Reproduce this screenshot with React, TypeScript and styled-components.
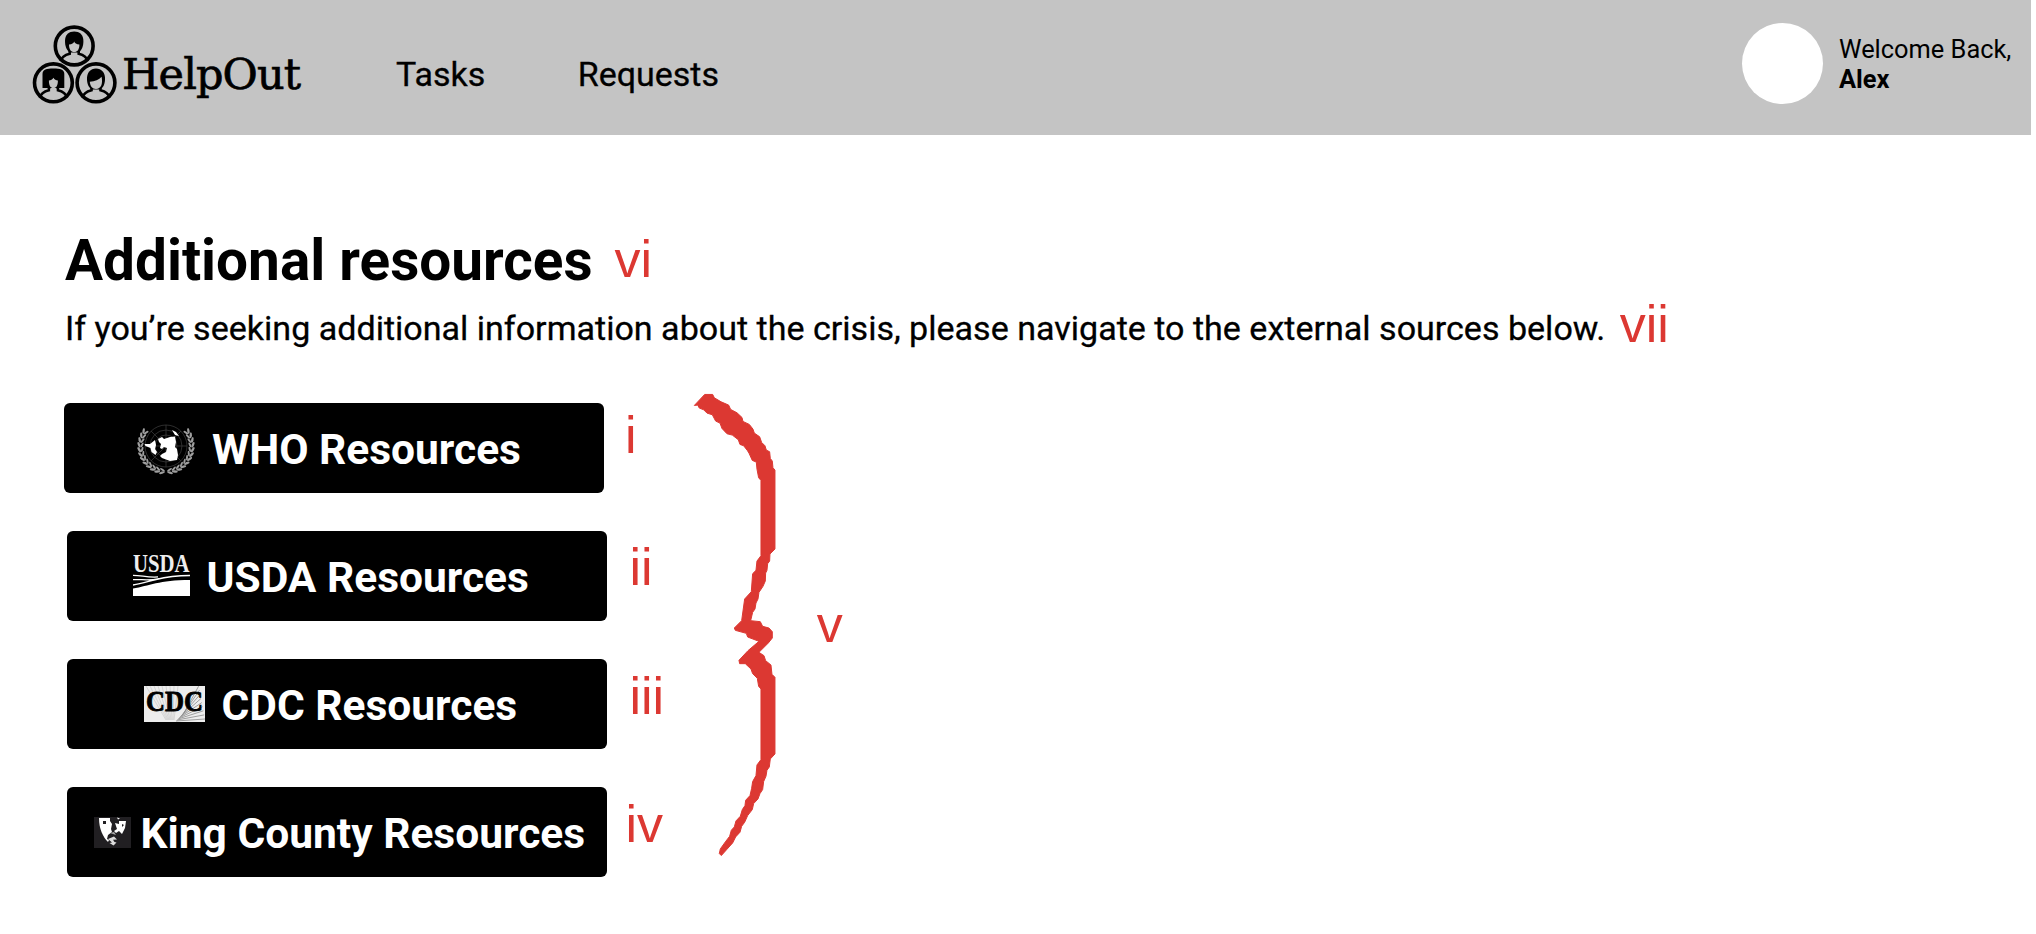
import React from 'react';
import styled, { createGlobalStyle } from 'styled-components';

const RED = '#dc3832';

const GlobalStyle = createGlobalStyle`
  * { box-sizing: border-box; }
  body {
    margin: 0;
    background: #fff;
    color: #000;
    font-family: Roboto, sans-serif;
  }
`;

const Page = styled.div`
  width: 2036px;
  height: 934px;
  overflow: hidden;
`;

const Header = styled.header`
  display: flex;
  align-items: center;
  width: 2031px;
  height: 134.5px;
  padding: 0 18px 7px 32px;
  background: #c4c4c4;
`;

const Brand = styled.div`
  display: flex;
  align-items: center;
  width: 364px;
`;

const BrandName = styled.span`
  padding: 20px 0 0 4px;
  font: 400 43px/50px 'DejaVu Serif', serif;
  letter-spacing: -0.9px;
  -webkit-text-stroke: 0.7px #000;
`;

const Nav = styled.nav`
  display: flex;
  gap: 92.5px;
  padding-top: 20px;
`;

const NavLink = styled.a`
  font-size: 34px;
  line-height: 40px;
  -webkit-text-stroke: 0.3px #000;
`;

const User = styled.div`
  display: flex;
  align-items: center;
  gap: 16px;
  margin-left: auto;
`;

const Avatar = styled.div`
  width: 81px;
  height: 81px;
  border-radius: 50%;
  background: #fff;
`;

const Greeting = styled.div`
  width: 174px;
  font-size: 25.4px;
  line-height: 30px;
  white-space: nowrap;
`;

const Main = styled.main`
  padding: 92.5px 0 0 64px;
`;

const TextRow = styled.div<{ $gap: number }>`
  display: flex;
  align-items: flex-start;
  gap: ${p => p.$gap}px;
  padding-left: 1px;
`;

const Title = styled.h1`
  margin: 0;
  padding-top: 1px;
  font-size: 56.7px;
  line-height: 66px;
  white-space: nowrap;
`;

const Intro = styled.p`
  margin: 0;
  padding-top: 14px;
  font-size: 34.05px;
  line-height: 40px;
  white-space: nowrap;
  -webkit-text-stroke: 0.3px #000;
`;

const Note = styled.span<{ $top?: number; $left?: number }>`
  padding: ${p => p.$top ?? 0}px 0 0 ${p => p.$left ?? 0}px;
  font: 400 52px/60px 'Liberation Sans', sans-serif;
  color: ${RED};
`;

const Columns = styled.div`
  display: flex;
  align-items: flex-start;
  padding-top: 37px;
`;

const List = styled.div`
  display: flex;
  flex-direction: column;
  gap: 37.7px;
  width: 629px;
  padding-top: 12px;
`;

const Row = styled.div<{ $indent: number; $gap: number }>`
  display: flex;
  align-items: flex-start;
  gap: ${p => p.$gap}px;
  height: 90.3px;
  padding-left: ${p => p.$indent}px;
`;

const ResourceButton = styled.button<{ $inset: number; $gap: number }>`
  display: flex;
  align-items: center;
  gap: ${p => p.$gap}px;
  flex: none;
  width: 540px;
  height: 90.3px;
  padding: 0 0 0 ${p => p.$inset}px;
  border: 0;
  border-radius: 6px;
  background: #000;
  color: #fff;
  font: 700 42.5px/50px Roboto, sans-serif;
  white-space: nowrap;
`;

const ButtonText = styled.span`
  padding-top: 4px;
`;

const Brace = styled.svg`
  display: block;
  flex: none;
`;

const Icon = styled.svg<{ $top?: number }>`
  display: block;
  flex: none;
  overflow: visible;
  margin-top: ${p => p.$top ?? 0}px;
`;

const Shoulders = ({ x, y }: { x: number; y: number }) => (
  <path
    d={`M${x - 13.5} ${y + 13}c1-4.5 4.5-6 9-7.2v-3h9v3c4.5 1.2 8 2.7 9 7.2`}
    fill="none" stroke="#000" strokeWidth="2.6"
  />
);

const Logo = () => (
  <Icon viewBox="32 24 86 82" width="86" height="82" $top={2}>
    <g fill="none" stroke="#000" strokeWidth="3.6">
      <circle cx="74.2" cy="46" r="18.9" />
      <circle cx="53.4" cy="82.8" r="18.9" />
      <circle cx="96" cy="82.8" r="18.9" />
    </g>
    <Shoulders x={74.2} y={48} />
    <path d="M65 41c0-6.500 4-9.500 9.200-9.500S83.400 34.500 83.400 41c0 5-1.500 9.500-5 11.500h-8.400C66.500 50.500 65 46 65 41z" />
    <path d="M69 44.500c3 0 4.600-1.400 5.200-3 .6 1.600 2.200 3 5.200 3 0 5-2 7.500-5.200 7.500s-5.200-2.500-5.200-7.500z" fill="#c4c4c4" />
    <Shoulders x={53.4} y={84.5} />
    <path d="M42.500 88V74c0-4.500 4-5.500 10.900-5.500S64.300 69.500 64.300 74v14z" />
    <path d="M48.900 80.500c1.800 0 3.500-1 4.500-2.700 1 1.700 2.700 2.700 4.500 2.700 0 5-1.500 7.500-4.500 7.500s-4.500-2.500-4.500-7.500z" fill="#c4c4c4" />
    <path d="M50.600 88h5.600v3.500h-5.600z" fill="#c4c4c4" />
    <Shoulders x={96} y={84.5} />
    <path d="M87 80c-.5-7.500 3.500-11.500 9-11.500s9.500 4 9 11.500c-.4 5-2 7.500-5 9.500h-8C89 87.500 87.400 85 87 80z" />
    <path d="M89.800 81.800c5.200-.3 9.200-2 11.800-5 1.500 7.500-.8 12.200-5.600 12.200-3.700 0-5.800-2.700-6.200-7.200z" fill="#c4c4c4" />
  </Icon>
);

const leafAngles = Array.from({ length: 12 }, (_, i) => 56 + i * 10.5);

const WhoIcon = () => (
  <Icon viewBox="0 0 60 52" width="60" height="52">
    <g fill="none" stroke="#fff" strokeWidth=".7" opacity=".25">
      <circle cx="30" cy="24" r="21" />
      <circle cx="30" cy="24" r="16" />
      <circle cx="30" cy="24" r="11" />
      <path d="M30 3v42M9 24h42M15 9l30 30M45 9L15 39" />
    </g>
    {leafAngles.map(a => (
      <g key={a} fill="#fff" opacity=".62">
        {[a, -a].map(r => (
          <g key={r} transform={`translate(30 24) rotate(${r})`}>
            <ellipse cx="0" cy="-27" rx="3" ry="1.2" transform={`rotate(${r > 0 ? 25 : -25} 0 -27)`} />
            <ellipse cx="0" cy="-24" rx="2.8" ry="1" transform={`rotate(${r > 0 ? -25 : 25} 0 -24)`} />
          </g>
        ))}
      </g>
    ))}
    <path d="M8.500 22l5.500 0 5-4 1 5-1 4 2 3-1.500 3-4-3-1-4-5-2zM22 17l4-2 2 2 6-2 5-.5 1 5.500-1 5 2 2 1 6-1 5-7 1-8-3-2-2 2-2 4-2 1-4-3-1-2 2-2-1 1-4-2-2zM36 8l4 2 3 4-4-1z" fill="#fff" />
  </Icon>
);

const UsdaIcon = () => (
  <Icon viewBox="0 0 57 40" width="57" height="40">
    <text x="0" y="16" textLength="56.5" lengthAdjust="spacingAndGlyphs" fill="#eee" fontFamily="Liberation Serif, serif" fontSize="24.5">USDA</text>
    <path d="M0 40V32.500C16 30 26 24 57 24V40z" fill="#fff" />
    <path d="M0 19.300c9 0 14 2.400 25 1.600M57 19.500c-15 0-25 1.700-34 4S8 28 0 29M0 23.600c9-.4 16 1.400 26-1" fill="none" stroke="#fff" strokeWidth="1.3" />
  </Icon>
);

const rays = Array.from({ length: 9 }, (_, i) => i);

const CdcIcon = () => (
  <Icon viewBox="0 0 61 36" width="61" height="36">
    <rect width="61" height="36" fill="#ededed" />
    <g stroke="#8a8a8a" strokeWidth=".8">
      {rays.map(i => <path key={i} d={`M${32 + i} ${35 - i}L${61 - i * 0.8} ${33 - i * 4.1}`} />)}
      {rays.map(i => <path key={i + 20} d={`M${30 - i} 34L${34 - i * 4} 0`} opacity=".3" />)}
    </g>
    <text x="2" y="25" textLength="57" lengthAdjust="spacingAndGlyphs" fill="#000" stroke="#000" strokeWidth=".9" fontFamily="Liberation Serif, serif" fontWeight="700" fontSize="30">CDC</text>
  </Icon>
);

const KingIcon = () => (
  <Icon viewBox="0 0 37 31" width="37" height="31">
    <rect width="37" height="31" fill="#211f22" />
    <path d="M5 1h11v3l2 3-1 5 1 3-4 3-1 4 2 1-1 2C9 20 5 12 5 1zM21 6l4 1V4h7l-1 7-3 6-3-3-3 2-2-2 3-2zM23 .5l3 1-2 1z" fill="#fff" />
    <path d="M9 4h3v3H9zM28 7l2 1-2 2z" fill="#211f22" />
    <path d="M14 22l6-2.500 3 3-4 .3 1.500 2.200 2 .5-3 3-4-2.500 2.500-.5z" fill="#ddd" />
    <path d="M16 16l4-1 2 3-3-1z" fill="#aaa" />
  </Icon>
);

const RESOURCES = [
  { label: 'WHO Resources', icon: <WhoIcon />, note: 'i', indent: 0, inset: 71.5, gap: 16.5, noteGap: 21, noteTop: 2 },
  { label: 'USDA Resources', icon: <UsdaIcon />, note: 'ii', indent: 3, inset: 65.5, gap: 17, noteGap: 22.5, noteTop: 6.5 },
  { label: 'CDC Resources', icon: <CdcIcon />, note: 'iii', indent: 3, inset: 77, gap: 16.5, noteGap: 22.5, noteTop: 7.5 },
  { label: 'King County Resources', icon: <KingIcon />, note: 'iv', indent: 3, inset: 26.5, gap: 10, noteGap: 18.5, noteTop: 7.5 },
];

export default function App() {
  return (
    <Page>
      <GlobalStyle />
      <Header>
        <Brand>
          <Logo />
          <BrandName>HelpOut</BrandName>
        </Brand>
        <Nav>
          <NavLink>Tasks</NavLink>
          <NavLink>Requests</NavLink>
        </Nav>
        <User>
          <Avatar />
          <Greeting>
            Welcome Back,
            <br />
            <b>Alex</b>
          </Greeting>
        </User>
      </Header>
      <Main>
        <TextRow $gap={22}>
          <Title>Additional resources</Title>
          <Note $top={2}>vi</Note>
        </TextRow>
        <TextRow $gap={14.5}>
          <Intro>
            If you’re seeking additional information about the crisis, please navigate to the external sources below.
          </Intro>
          <Note $top={-2}>vii</Note>
        </TextRow>
        <Columns>
          <List>
            {RESOURCES.map(r => (
              <Row key={r.label} $indent={r.indent} $gap={r.noteGap}>
                <ResourceButton $inset={r.inset} $gap={r.gap}>
                  {r.icon}
                  <ButtonText>{r.label}</ButtonText>
                </ResourceButton>
                <Note $top={r.noteTop}>{r.note}</Note>
              </Row>
            ))}
          </List>
          <Brace viewBox="40 30 250 1400" width="83.3" height="466.7">
            <path
              fill={RED}
              stroke={RED}
              strokeWidth="3"
              strokeLinejoin="round"
              d="M44 73L75 40 99 40 104 50 124 62 147 72 153 85 172 95 187 109 190 121 209 130 220 144 224 156 240 167 246 184 256 194 260 207 270 212 272 232 278 240 280 260 286 267 286 504 271 519 270 540 264 548 262 568 258 576 257 600 250 616 238 634 235 654 229 666 226 684 219 694 213 719 242 722 249 736 268 741 278 752 278 771 266 786 238 814 253 824 258 839 274 852 277 880 286 889 286 1119 272 1134 269 1158 262 1168 259 1186 252 1202 249 1226 241 1238 235 1254 222 1268 218 1286 204 1304 195 1324 186 1336 181 1354 168 1368 159 1386 142 1405 125 1424 119 1418 122 1404 137 1383 150 1366 155 1348 164 1338 169 1320 182 1306 188 1286 196 1274 198 1258 211 1244 216 1222 219 1202 229 1184 232 1152 244 1136 244 924 237 916 233 892 219 878 214 864 197 848 180 848 178 838 205 809 238 781 204 768 200 757 167 748 164 741 186 719 195 654 215 632 219 578 229 568 232 540 244 524 244 298 237 290 232 264 230 243 218 238 208 216 203 208 192 194 181 190 176 176 158 162 142 158 127 142 121 126 108 120 98 101 82 96 72 86 59 81 54 72Z"
            />
          </Brace>
          <Note $top={203} $left={40.5}>v</Note>
        </Columns>
      </Main>
    </Page>
  );
}
